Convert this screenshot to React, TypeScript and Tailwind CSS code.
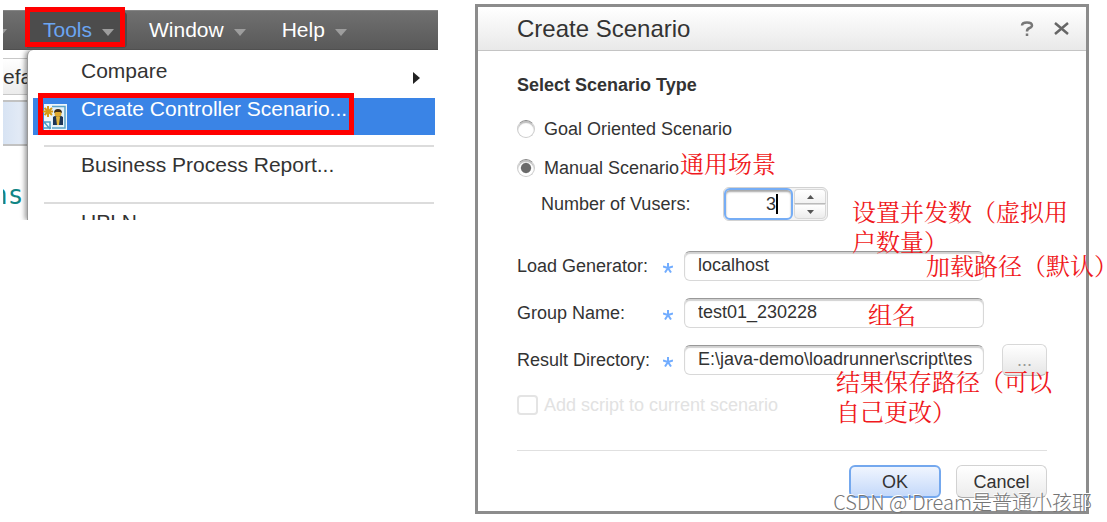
import type { ReactNode } from "react";

function Note({ className, children }: { className: string; children: ReactNode }) {
  return (
    <p
      className={`pointer-events-none absolute z-10 whitespace-nowrap font-['Noto_Serif_CJK_SC','Noto_Sans_CJK_SC',serif] text-2xl leading-[30px] text-[#f01820] ${className}`}
    >
      {children}
    </p>
  );
}

function Caret() {
  return (
    <svg width="12" height="7" viewBox="0 0 12 7" className="mt-1" aria-hidden="true">
      <path d="M0 0H12L6 7Z" fill="#9d9d9d" />
    </svg>
  );
}

function ScenarioIcon() {
  return (
    <svg width="25" height="27" viewBox="0 0 25 27" aria-hidden="true">
      <path d="M1 1H24V27H1Z" fill="#eef6fb" />
      <path d="M9 3.5H22V25H9" fill="#e4f1f8" stroke="#5ba3c8" strokeWidth="1.5" />
      <path d="M1 19H7V26M1 19L7 26M1 25H8" fill="none" stroke="#4f9cc4" strokeWidth="1.5" />
      <path d="M10 14Q15 10 20 14V22H10Z" fill="#1d3557" />
      <path d="M13 14H17L16 22H14Z" fill="#e3b53c" />
      <circle cx="15" cy="10.5" r="3.5" fill="#dda92f" />
      <path d="M11 10Q11 6 15 6T19 10L17 9H13Z" fill="#3b2b18" />
      <path d="M5 3V14M0 8.500H10M1.500 5L9 12M9 5L1.500 12" stroke="#d69b16" strokeWidth="2" />
    </svg>
  );
}

function MenuPanel() {
  return (
    <section className="relative mt-[10px] min-w-0 text-[21px]">
      <nav className="flex h-10 items-center overflow-hidden border-t border-b border-t-[#858585] border-b-[#505050] bg-linear-to-b from-[#707070] to-[#595959] text-white">
        <div className="-ml-2 w-8 shrink-0">
          <Caret />
        </div>
        <button className="relative flex h-9 w-[100px] shrink-0 items-center gap-[10px] rounded-r bg-[#4c4c4c] pl-4 text-[#6ba5f2]">
          Tools <Caret />
        </button>
        <button className="ml-[22px] flex shrink-0 items-center gap-[10px]">
          Window <Caret />
        </button>
        <button className="ml-9 flex shrink-0 items-center gap-[10px]">
          Help <Caret />
        </button>
      </nav>
      <div className="pointer-events-none absolute -top-[3px] left-[22px] h-10 w-[100px] border-5 border-[#ff0000]" />

      <div className="flex h-[170px] overflow-hidden">
        <div className="w-6 shrink-0 overflow-hidden bg-white">
          <div className="mt-2 h-[37px] border-y border-[#c8c8c8] bg-linear-to-b from-white to-[#ececec] leading-9 text-[#333]">
            efault
          </div>
          <div className="mt-[5px] h-[46px] border-y-2 border-[#c2c2c2] bg-linear-to-r from-[#d7e3f3] to-[#e7edf7]" />
          <div className="-ml-[11px] mt-[29px] font-['DejaVu_Sans_Mono','Noto_Sans',monospace] text-[26px] leading-10 text-[#108585]">
            ns
          </div>
        </div>
        <div className="z-0 min-w-0 flex-1 rounded-tl-md border-l border-[#999] bg-white pt-px text-[#333] shadow-[-2px_0_5px_rgba(0,0,0,0.4)]">
          <button className="flex h-[47px] w-full items-start justify-between pt-[6px] pr-[18px] pl-[53px] leading-7">
            Compare
            <svg width="7" height="12" viewBox="0 0 7 12" className="mt-[15px]" aria-hidden="true">
              <path d="M0 0L7 6L0 12Z" fill="#222" />
            </svg>
          </button>
          <button className="relative ml-[5px] mr-[3px] flex h-[37px] w-[calc(100%-8px)] items-start bg-[#3a84e6] pl-[10px] leading-[22px] text-white">
            <span className="mt-[5px] w-[38px] shrink-0">
              <ScenarioIcon />
            </span>
            <span className="whitespace-nowrap">Create Controller Scenario...</span>
            <span className="pointer-events-none absolute -top-[5px] left-[5px] h-[42px] w-[316px] border-5 border-[#ff0000]" />
          </button>
          <hr className="mt-[10px] mr-1 ml-4 border-t-2 border-[#dcdcdc]" />
          <button className="mt-1 block h-7 pl-[53px] leading-7">
            Business Process Report...
          </button>
          <hr className="mt-[23px] mr-1 ml-4 border-t-2 border-[#dcdcdc]" />
          <button className="mt-1 block h-7 pl-[53px] leading-7">UPLN</button>
        </div>
      </div>
    </section>
  );
}

function Field({
  id,
  label,
  value,
  children,
}: {
  id: string;
  label: string;
  value: string;
  children?: ReactNode;
}) {
  return (
    <div className="relative flex h-[47px] items-center">
      <label htmlFor={id} className="w-[146px] shrink-0 whitespace-nowrap">
        {label}
      </label>
      <svg width="10" height="10" viewBox="0 0 10 10" className="mt-1 mr-[11px] shrink-0" aria-hidden="true">
        <path d="M5 5V0M5 5L0 3.500M5 5L10 3.500M5 5L2 9.500M5 5L8 9.500" stroke="#72adff" strokeWidth="2" />
      </svg>
      <input
        id={id}
        type="text"
        defaultValue={value}
        className="h-[30px] min-w-0 flex-1 rounded-md border border-[#d8d8d8] border-t-[#999] bg-white pr-[7px] pl-[13px] shadow-[inset_0_2px_1px_rgba(0,0,0,0.18)] outline-none"
      />
      <div className="ml-[18px] w-[45px] shrink-0">{children}</div>
    </div>
  );
}

const radio =
  "mr-[9px] size-[18px] shrink-0 appearance-none rounded-full border border-[#ccc] border-t-[#888] bg-white shadow-[inset_0_2px_1px_rgba(0,0,0,0.25)] checked:bg-radial checked:from-[#6a6a6a] checked:from-40% checked:to-white checked:to-50%";

function ScenarioDialog() {
  return (
    <form
      className="relative mt-1 min-w-0 border-3 border-[#8c8c8c] bg-white text-lg leading-6 text-[#333]"
      onSubmit={(event) => event.preventDefault()}
    >
      <header className="flex h-11 items-center border-b border-[#c4c4c4] bg-linear-to-b from-white to-[#e9e9e9] pr-[17px] pl-[39px]">
        <h1 className="flex-1 text-2xl">Create Scenario</h1>
        <button type="button" aria-label="Help" className="mr-5">
          <svg width="14" height="15" viewBox="0 0 14 15" fill="none" stroke="#777" strokeWidth="2.500" aria-hidden="true">
            <path d="M2 4.500Q2 1.500 7 1.500T12 4.500Q12 6 9.500 7T7 10.500M7 12.500V15" />
          </svg>
        </button>
        <button type="button" aria-label="Close">
          <svg width="15" height="13" viewBox="0 0 15 13" fill="none" stroke="#666" strokeWidth="2.500" aria-hidden="true">
            <path d="M1 1L14 12M14 1L1 12" />
          </svg>
        </button>
      </header>

      <div className="px-[39px] pt-[22px] pb-[13px]">
        <h2 className="font-bold">Select Scenario Type</h2>
        <label className="mt-3 flex h-10 items-center">
          <input type="radio" name="type" className={radio} />
          Goal Oriented Scenario
        </label>
        <div className="relative">
          <label className="flex h-[38px] items-center">
            <input type="radio" name="type" defaultChecked className={radio} />
            Manual Scenario
          </label>
          <Note className="-top-px left-[163px]">通用场景</Note>
        </div>
        <div className="relative flex h-[34px] items-center pl-6">
          <label htmlFor="vusers" className="w-[182px] whitespace-nowrap">
            Number of Vusers:
          </label>
          <div className="flex h-[34px] rounded-md border border-[#d2d2d2] bg-[#f3f3f3]">
            <div className="relative flex">
              <input
                id="vusers"
                type="text"
                defaultValue="3"
                className="w-[69px] rounded-md border-2 border-[#76adf5] bg-white pr-[15px] text-right shadow-[inset_0_2px_2px_rgba(0,0,0,0.35)] outline-none"
              />
              <span className="absolute top-[6px] right-[15px] h-5 w-0.5 bg-black" />
            </div>
            <div className="flex w-[34px] flex-col p-px">
              <button type="button" aria-label="Increase" className="flex flex-1 items-center justify-center rounded-t border border-[#d8d8d8] border-b-[#bbb] bg-linear-to-b from-white to-[#f2f2f2]">
                <svg width="7" height="4" viewBox="0 0 7 4" aria-hidden="true"><path d="M0 4H7L3.500 0Z" fill="#555" /></svg>
              </button>
              <button type="button" aria-label="Decrease" className="flex flex-1 items-center justify-center rounded-b border border-[#d8d8d8] bg-linear-to-b from-white to-[#ececec]">
                <svg width="7" height="4" viewBox="0 0 7 4" aria-hidden="true"><path d="M0 0H7L3.500 4Z" fill="#555" /></svg>
              </button>
            </div>
          </div>
          <Note className="top-[9px] -right-[21px]">
            设置并发数（虚拟用
            <br />
            户数量）
          </Note>
        </div>

        <div className="relative mt-[21px]">
          <Field id="generator" label="Load Generator:" value="localhost" />
          <Field id="group" label="Group Name:" value="test01_230228" />
          <Field id="directory" label="Result Directory:" value="E:\java-demo\loadrunner\script\tes">
            <button type="button" className="h-8 w-full rounded-md border border-[#d8d8d8] border-b-[#b5b5b5] bg-linear-to-b from-white to-[#e6e6e6] text-[#999]">
              ...
            </button>
          </Field>
          <Note className="top-2 -right-[71px]">加载路径（默认）</Note>
          <Note className="top-[57px] right-[131px]">组名</Note>
          <Note className="top-[124px] -right-[5px]">
            结果保存路径（可以
            <br />
            自己更改）
          </Note>
        </div>

        <label className="flex h-11 items-center text-[#e2e2e2]">
          <input type="checkbox" disabled className="mr-[6px] h-5 w-[21px] appearance-none rounded border-2 border-[#e4e4e4] bg-white" />
          Add script to current scenario
        </label>

        <footer className="mt-[23px] flex justify-end gap-[15px] border-t border-[#e0e0e0] pt-[14px]">
          <button type="submit" className="h-[33px] w-[92px] rounded-md border-2 border-[#74a8ee] bg-linear-to-b from-[#f0f5fe] to-[#c4d9fa]">
            OK
          </button>
          <button type="button" className="h-[33px] w-[91px] rounded-md border border-[#d2d2d2] border-b-[#aaa] bg-linear-to-b from-white to-[#ececec]">
            Cancel
          </button>
        </footer>
      </div>

      <p className="pointer-events-none absolute -right-[6px] -bottom-[3px] z-10 whitespace-nowrap font-['Noto_Sans_CJK_SC',sans-serif] text-xl leading-6 font-light text-[#757575] [text-shadow:-1px_-1px_0_#fff]">
        CSDN @'Dream是普通小孩耶
      </p>
    </form>
  );
}

export default function App() {
  return (
    <main className="grid min-h-screen grid-cols-[435fr_614fr] items-start gap-[37px] overflow-hidden bg-white pr-[18px] pl-[3px] font-['Liberation_Sans','Noto_Sans_CJK_SC',sans-serif]">
      <MenuPanel />
      <ScenarioDialog />
    </main>
  );
}
